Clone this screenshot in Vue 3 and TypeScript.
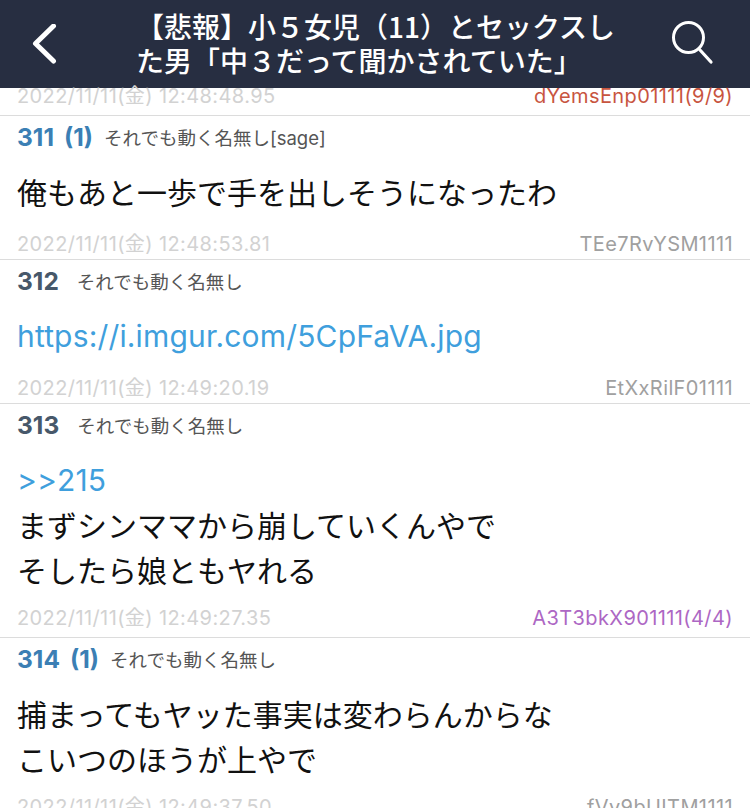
<script setup lang="ts">
interface Post {
  no: number
  replies?: number
  name: string
  lines: string[]
  anchor?: string
  link?: string
  date: string
  id: string
  idClass?: string
}

const posts: Post[] = [
  {
    no: 311,
    replies: 1,
    name: 'それでも動く名無し[sage]',
    lines: ['俺もあと一歩で手を出しそうになったわ'],
    date: '2022/11/11(金) 12:48:53.81',
    id: 'TEe7RvYSM1111',
  },
  {
    no: 312,
    name: 'それでも動く名無し',
    lines: [],
    link: 'https://i.imgur.com/5CpFaVA.jpg',
    date: '2022/11/11(金) 12:49:20.19',
    id: 'EtXxRilF01111',
  },
  {
    no: 313,
    name: 'それでも動く名無し',
    lines: ['まずシンママから崩していくんやで', 'そしたら娘ともヤれる'],
    anchor: '>>215',
    date: '2022/11/11(金) 12:49:27.35',
    id: 'A3T3bkX901111(4/4)',
    idClass: 'id-purple',
  },
  {
    no: 314,
    replies: 1,
    name: 'それでも動く名無し',
    lines: ['捕まってもヤッた事実は変わらんからな', 'こいつのほうが上やで'],
    date: '2022/11/11(金) 12:49:37.50',
    id: 'fVy9bUITM1111',
  },
]
</script>

<template>
  <div class="screen">
    <header class="bar">
      <svg class="back" width="26" height="40" viewBox="0 0 26 40" aria-label="戻る">
        <path d="M21.500 2 L3.500 19.500 L21.500 37" fill="none" stroke="#fff" stroke-width="5" stroke-linecap="round" stroke-linejoin="round" />
      </svg>
      <h1 class="title">【悲報】小５女児（11）とセックスした男「中３だって聞かされていた」</h1>
      <svg class="search" width="44" height="46" viewBox="0 0 44 46" aria-label="検索">
        <circle cx="18.500" cy="16.500" r="15" fill="none" stroke="#fff" stroke-width="3" />
        <path d="M30 29 L41 41" fill="none" stroke="#fff" stroke-width="3.200" stroke-linecap="round" />
      </svg>
    </header>

    <main class="list">
      <div class="foot foot-first">
        <span class="date">2022/11/11(金) 12:48:48.95</span>
        <span class="id id-red">dYemsEnp01111(9/9)</span>
      </div>
      <article v-for="p in posts" :key="p.no" class="post">
        <div class="head">
          <span class="no" :class="{ 'no-replied': p.replies }">{{ p.no }}</span>
          <span v-if="p.replies" class="no no-replied count">({{ p.replies }})</span>
          <span class="name" :class="{ 'name-replied': p.replies }">{{ p.name }}</span>
        </div>
        <div class="body">
          <a v-if="p.link" class="link">{{ p.link }}</a>
          <a v-if="p.anchor" class="link">{{ p.anchor }}</a>
          <p v-for="l in p.lines" :key="l" class="line">{{ l }}</p>
        </div>
        <div class="foot" :class="{ 'foot-multi': p.lines.length > 1 }">
          <span class="date">{{ p.date }}</span>
          <span class="id" :class="p.idClass">{{ p.id }}</span>
        </div>
      </article>
    </main>
  </div>
</template>

<style>
html,
body {
  margin: 0;
  background: #fff;
}
</style>

<style scoped>
.screen {
  width: 750px;
  height: 808px;
  overflow: hidden;
  display: flex;
  flex-direction: column;
  background: #fff;
  font-family: "Inter", "Noto Sans CJK JP", sans-serif;
}
.bar {
  flex: none;
  height: 88px;
  display: flex;
  align-items: center;
  background: #272e41;
  padding-left: 32px;
  box-sizing: border-box;
}
.back {
  flex: none;
  margin-right: 78px;
  margin-top: -1px;
}
.title {
  flex: none;
  width: 484px;
  margin: 0 0 2px;
  color: #fff;
  font-family: "Noto Sans CJK JP", sans-serif;
  font-size: 28px;
  line-height: 34px;
  font-weight: 500;
}
.search {
  flex: none;
  margin-left: 50px;
}
.list {
  flex: 1;
  min-height: 0;
}
.head {
  height: 42px;
  display: flex;
  align-items: center;
  padding-left: 17px;
}
.no {
  font-family: "Inter", sans-serif;
  font-weight: 700;
  font-size: 24.500px;
  color: #47586a;
}
.no-replied {
  color: #3b7fb4;
}
.count {
  margin-left: 10px;
}
.name {
  margin-left: 18px;
  font-size: 18.500px;
  color: #555;
}
.name-replied {
  margin-left: 11px;
}
.body {
  padding-top: 12px;
}
.line,
.link {
  display: block;
  margin: 0;
  padding-left: 17px;
  height: 45px;
  line-height: 42px;
  font-size: 30px;
  color: #111;
  font-family: "Noto Sans CJK JP", sans-serif;
}
.link {
  line-height: 45px;
  font-family: "Inter", sans-serif;
  letter-spacing: 0.160px;
  color: #3f9fdd;
}
.foot {
  height: 29px;
  margin-top: 15px;
  padding: 0 17px;
  display: flex;
  align-items: center;
  justify-content: space-between;
  border-bottom: 1px solid #dcdcdc;
  font-size: 20px;
  line-height: 29px;
  letter-spacing: 0.400px;
}
.foot-first {
  margin-top: 0;
  height: 19px;
  padding-bottom: 8px;
  align-items: flex-start;
  line-height: 17px;
}
.foot-multi {
  margin-top: 13px;
  height: 25px;
  padding-bottom: 6px;
}
.date {
  color: #d2d2d2;
}
.id {
  color: #a0a0a0;
}
.id-red {
  color: #c8553f;
}
.id-purple {
  color: #ad67c4;
}
</style>
